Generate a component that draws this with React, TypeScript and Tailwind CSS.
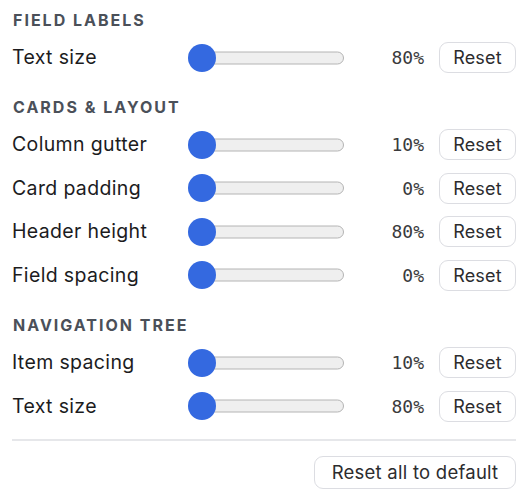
import React from "react";

type Row = { label: string; value: number };
type Section = { title: string; rows: Row[]; gapTop: string };

const sections: Section[] = [
  { title: "Field labels", gapTop: "mt-0", rows: [{ label: "Text size", value: 80 }] },
  {
    title: "Cards & layout",
    gapTop: "mt-[17.5px]",
    rows: [
      { label: "Column gutter", value: 10 },
      { label: "Card padding", value: 0 },
      { label: "Header height", value: 80 },
      { label: "Field spacing", value: 0 },
    ],
  },
  {
    title: "Navigation tree",
    gapTop: "mt-[18px]",
    rows: [
      { label: "Item spacing", value: 10 },
      { label: "Text size", value: 80 },
    ],
  },
];

const sans = { fontFamily: "Inter, 'Noto Sans', sans-serif" };
const mono = { fontFamily: "'DejaVu Sans Mono', 'Liberation Mono', monospace" };

function Slider() {
  return (
    <div className="relative h-[28px] w-[156px] shrink-0">
      <div className="absolute left-[12px] right-0 top-1/2 h-[13px] -translate-y-1/2 rounded-full border border-[#b4b4b4] bg-[#efefef]" />
      <div className="absolute left-0 top-0 h-[28px] w-[28px] rounded-full bg-[#3469e0]" />
    </div>
  );
}

function SettingRow({ label, value }: Row) {
  return (
    <div className="flex h-[43.5px] items-center">
      <div className="w-[176px] shrink-0 text-[19.5px] tracking-[0.35px] text-[#1c1c1e]" style={sans}>
        {label}
      </div>
      <Slider />
      <div className="flex-1 text-right text-[18px] text-[#3a3a3c]" style={mono}>
        {value}%
      </div>
      <button
        className="ml-[15px] flex h-[31px] w-[77px] items-center justify-center rounded-[9px] border border-[#dcdde2] bg-white text-[18px] tracking-[0.2px] text-[#2c2c2e]"
        style={sans}
      >
        Reset
      </button>
    </div>
  );
}

export default function App() {
  return (
    <div className="min-h-[500px] w-[529px] bg-white pl-3 pr-[13px] pt-[10px]" style={sans}>
      {sections.map((s) => (
        <div key={s.title} className={s.gapTop}>
          <div className="flex h-[20px] items-center pl-px text-[16px] font-bold uppercase tracking-[2px] text-[#4b5059]">
            {s.title}
          </div>
          <div className="mt-[6px]">
            {s.rows.map((r, i) => (
              <SettingRow key={s.title + i} {...r} />
            ))}
          </div>
        </div>
      ))}
      <div className="mt-[10.5px] h-[2px] bg-[#e6e7ea]" />
      <div className="mt-[15.5px] flex justify-end">
        <button className="flex h-[33px] w-[202px] items-center justify-center rounded-[9px] border border-[#dcdde2] bg-white text-[18.5px] tracking-[0.25px] text-[#2c2c2e]">
          Reset all to default
        </button>
      </div>
    </div>
  );
}
